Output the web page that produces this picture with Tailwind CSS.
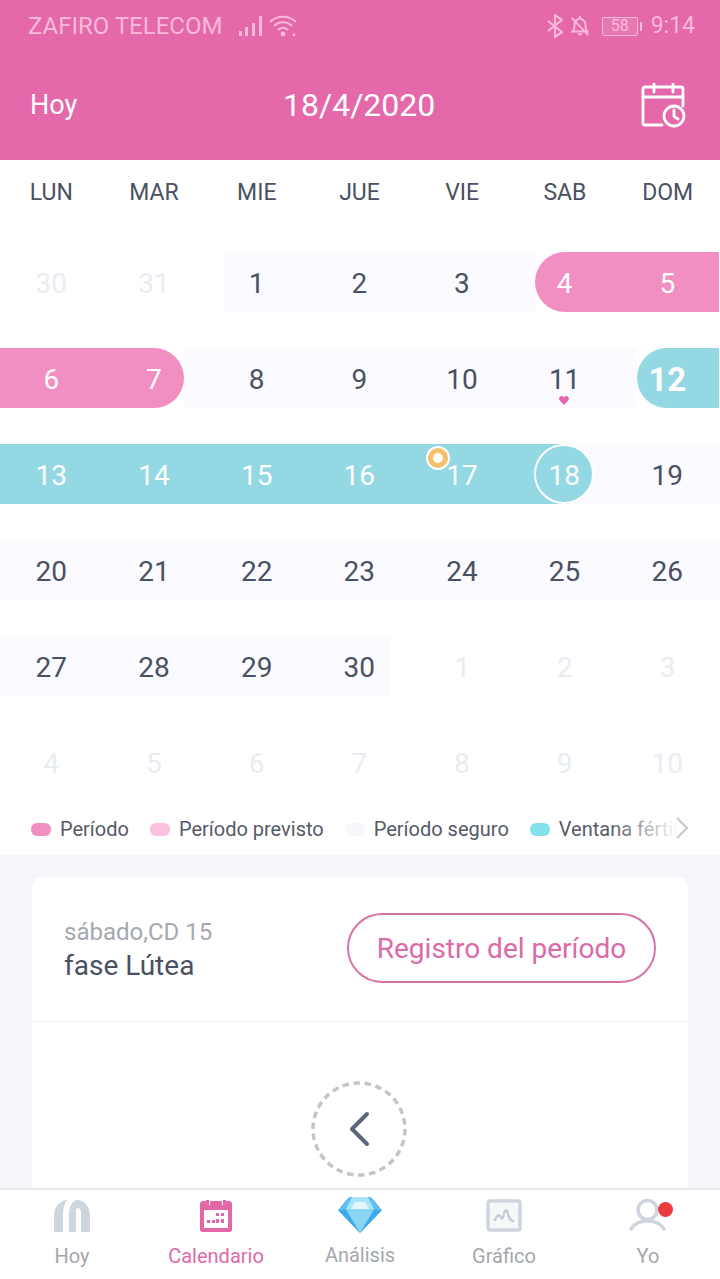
<!doctype html>
<html><head><meta charset="utf-8"><script src="https://cdn.jsdelivr.net/npm/@tailwindcss/browser@4"></script></head>
<body class="bg-white">
<div class="w-[720px] h-[1279px] overflow-hidden flex flex-col font-['Roboto',sans-serif] bg-white text-[#4a5163]">
  <header class="h-[160px] bg-[#e468aa] text-white shrink-0">
    <div class="h-[50px] flex items-center pl-[28px] pr-[25px] pt-[2px] text-[#f8b9da] text-[24px]">
      <span>ZAFIRO TELECOM</span>
      <svg class="ml-[17px]" width="25" height="22" viewBox="0 0 25 22" fill="#f8b9da"><rect x="0" y="16" width="3" height="5"/><rect x="6" y="12" width="3" height="9"/><rect x="13" y="8" width="3" height="13"/><rect x="20" y="1" width="3" height="20"/></svg>
      <svg class="ml-[5px]" width="28" height="24" viewBox="0 0 28 24" fill="none" stroke="#f8b9da" stroke-width="2.200"><path d="M1 8c7-7 19-7 26 0M5 12c5-5 13-5 18 0M9 16c3-3 7-3 10 0"/><circle cx="14" cy="20" r="2.400" fill="#f8b9da" stroke="none"/><circle cx="25" cy="21" r="1.400" fill="#f8b9da" stroke="none"/></svg>
      <div class="ml-auto flex items-center text-[23px]">
        <svg width="16" height="24" viewBox="0 0 16 24" fill="none" stroke="#f8b9da" stroke-width="2.200"><path d="M1 7l14 11-7 5V1l7 5L1 17"/></svg>
        <svg class="ml-[7px]" width="20" height="24" viewBox="0 0 22 24" fill="none" stroke="#f8b9da" stroke-width="2.200"><path d="M3 18c2-2 2-4 2-8 0-3 3-6 6-6s6 3 6 6c0 4 0 6 2 8zM9 21h4M11 1v3M2 3l18 19"/></svg>
        <div class="ml-[12px] w-[36px] h-[19px] border border-[#f8b9da] rounded-[2px] flex items-center justify-center text-[16px] leading-none bg-[#f8b9da]/20">58</div>
        <div class="ml-[2px] w-[2px] h-[9px] bg-[#f8b9da]"></div>
        <span class="ml-[9px]">9:14</span>
      </div>
    </div>
    <div class="h-[110px] flex items-center justify-between pl-[30px] pr-[34px]">
      <span class="text-[27px]">Hoy</span>
      <span class="text-[32px]">18/4/2020</span>
      <svg width="45" height="45" viewBox="0 0 45 45" fill="none" stroke="#fff" stroke-width="2.800" stroke-linecap="round" stroke-linejoin="round"><path d="M21 42H4a2 2 0 0 1-2-2V6a2 2 0 0 1 2-2h36a2 2 0 0 1 2 2v17"/><path d="M2 14h40M13 1v8M32 1v8"/><circle cx="33" cy="33" r="10"/><path d="M33 27v6.500l4 2.500"/></svg>
    </div>
  </header>

  <div class="h-[62px] pt-[4px] grid grid-cols-7 w-[719px] items-center text-center text-[23px] shrink-0">
    <span>LUN</span><span>MAR</span><span>MIE</span><span>JUE</span><span>VIE</span><span>SAB</span><span>DOM</span>
  </div>

  <div class="w-[719px] pt-[30px] flex flex-col gap-[36px] text-[28px] leading-[64px] text-center shrink-0">
    <div class="flex h-[60px]">
      <div class="flex w-[225px] shrink-0 text-[#e8edf4]"><span class="w-[102.67px] shrink-0">30</span><span class="w-[102.67px] shrink-0">31</span></div>
      <div class="flex w-[310px] shrink-0 bg-[#fafaff]"><span class="w-[102.67px] shrink-0 -ml-[19.670px]">1</span><span class="w-[102.67px] shrink-0">2</span><span class="w-[102.67px] shrink-0">3</span></div>
      <div class="flex w-[184px] shrink-0 bg-[#f28fc2] rounded-l-[30px] text-white"><span class="w-[102.67px] shrink-0 -ml-[21.670px]">4</span><span class="w-[102.67px] shrink-0">5</span></div>
    </div>
    <div class="flex h-[60px]">
      <div class="flex w-[184px] shrink-0 bg-[#f28fc2] rounded-r-[30px] text-white"><span class="w-[102.67px] shrink-0">6</span><span class="w-[102.67px] shrink-0">7</span></div>
      <div class="flex w-[453px] shrink-0 bg-[#fafaff]">
        <span class="w-[102.67px] shrink-0 ml-[21.330px]">8</span><span class="w-[102.67px] shrink-0">9</span><span class="w-[102.67px] shrink-0">10</span>
        <span class="w-[102.67px] shrink-0 relative">11<svg class="absolute left-[46px] top-[48px]" width="10" height="9" viewBox="0 0 10 9" fill="#e567a9"><path d="M5 9L.6 4.200C-.8 2 .800 0 2.600 0 3.700 0 4.500.6 5 1.500 5.500.6 6.300 0 7.400 0c1.800 0 3.400 2 2 4.200z"/></svg></span>
      </div>
      <div class="flex w-[82px] shrink-0 bg-[#93d8e2] rounded-l-[30px] text-white font-bold text-[33px]"><span class="w-[102.67px] shrink-0 -ml-[21px]">12</span></div>
    </div>
    <div class="flex h-[60px] bg-[#fafaff]">
      <div class="flex w-[593px] shrink-0 bg-[#93d8e2] rounded-r-[30px] text-white">
        <span class="w-[102.67px] shrink-0">13</span><span class="w-[102.67px] shrink-0">14</span><span class="w-[102.67px] shrink-0">15</span><span class="w-[102.67px] shrink-0">16</span>
        <span class="w-[102.67px] shrink-0 relative">17<span class="absolute left-[15px] top-[2px] w-[24px] h-[24px] rounded-full bg-white flex items-center justify-center"><span class="w-[20px] h-[20px] rounded-full border-[5px] border-[#f5bf6c] bg-white"></span></span></span>
        <span class="w-[60px] h-[60px] shrink-0 ml-[21px] leading-[60px] rounded-full border-[2px] border-white">18</span>
      </div>
      <div class="flex"><span class="w-[102.67px] ml-[23px] shrink-0">19</span></div>
    </div>
    <div class="flex h-[60px] bg-[#fafaff]">
      <span class="w-[102.67px] shrink-0">20</span><span class="w-[102.67px] shrink-0">21</span><span class="w-[102.67px] shrink-0">22</span><span class="w-[102.67px] shrink-0">23</span><span class="w-[102.67px] shrink-0">24</span><span class="w-[102.67px] shrink-0">25</span><span class="w-[102.67px] shrink-0">26</span>
    </div>
    <div class="flex h-[60px]">
      <div class="flex w-[390px] shrink-0 bg-[#fafaff]"><span class="w-[102.67px] shrink-0">27</span><span class="w-[102.67px] shrink-0">28</span><span class="w-[102.67px] shrink-0">29</span><span class="w-[102.67px] shrink-0">30</span></div>
      <div class="flex text-[#e8edf4]"><span class="w-[102.67px] shrink-0 ml-[21px]">1</span><span class="w-[102.67px] shrink-0">2</span><span class="w-[102.67px] shrink-0">3</span></div>
    </div>
    <div class="flex h-[60px] text-[#e8edf4]">
      <span class="w-[102.67px] shrink-0">4</span><span class="w-[102.67px] shrink-0">5</span><span class="w-[102.67px] shrink-0">6</span><span class="w-[102.67px] shrink-0">7</span><span class="w-[102.67px] shrink-0">8</span><span class="w-[102.67px] shrink-0">9</span><span class="w-[102.67px] shrink-0">10</span>
    </div>
  </div>

  <div class="relative h-[63px] flex items-center pl-[31px] pt-[11px] text-[20px] whitespace-nowrap overflow-hidden shrink-0 text-[#555a68]">
    <span class="w-[20px] h-[13px] rounded-[6px] bg-[#f08fc0] shrink-0"></span><span class="ml-[9px]">Período</span>
    <span class="ml-[21px] w-[20px] h-[13px] rounded-[6px] bg-[#fbc0dd] shrink-0"></span><span class="ml-[9px]">Período previsto</span>
    <span class="ml-[21px] w-[20px] h-[13px] rounded-[6px] bg-[#f8f7fb] shrink-0"></span><span class="ml-[9px]">Período seguro</span>
    <span class="ml-[21px] w-[20px] h-[13px] rounded-[6px] bg-[#84e1ec] shrink-0"></span><span class="ml-[9px]">Ventana fértil</span>
    <div class="absolute left-[610px] right-0 top-0 bottom-0 bg-linear-to-r from-white/0 to-white to-[62%]"></div>
    <svg class="absolute left-[675px] top-[24px]" width="14" height="24" viewBox="0 0 14 24" fill="none" stroke="#c9c9cd" stroke-width="2.200"><path d="M2 2l10 10L2 22"/></svg>
  </div>

  <main class="flex-1 bg-[#f5f6fa] px-[32px] pt-[22px] overflow-hidden min-h-0">
    <div class="bg-white rounded-t-[10px] h-[400px]">
      <div class="h-[145px] flex items-center justify-between pl-[32px] pr-[32px] border-b border-[#eff0f3]">
        <div class="pt-[2px]">
          <div class="text-[24px] leading-[32px] text-[#a5a8b0]">sábado,CD 15</div>
          <div class="text-[28px] leading-[36px] text-[#4a5060]">fase Lútea</div>
        </div>
        <div class="w-[309px] h-[70px] -mt-[2px] pt-[2px] rounded-full border-2 border-[#d672a8] text-[#dc6aa8] text-[28px] flex items-center justify-center">Registro del período</div>
      </div>
      <div class="flex justify-center pt-[59px]">
        <div class="relative w-[96px] h-[96px] mr-[2px] flex items-center justify-center">
          <svg class="absolute inset-0" width="96" height="96" viewBox="0 0 96 96" fill="none"><circle cx="48" cy="48" r="46" stroke="#c4c5c9" stroke-width="3.500" stroke-dasharray="6.500 4.600"/></svg>
          <svg class="ml-[2px]" width="24" height="36" viewBox="0 0 24 36" fill="none" stroke="#5d6579" stroke-width="4" stroke-linecap="round" stroke-linejoin="round"><path d="M19 3L4 18l15 15"/></svg>
        </div>
      </div>
    </div>
  </main>

  <nav class="h-[91px] shrink-0 bg-white border-t-2 border-[#e9eaee] grid grid-cols-5 text-center text-[20px] text-[#a4a7ae]">
    <div class="flex flex-col items-center pt-[9px]">
      <svg width="38" height="34" viewBox="0 0 38 34" fill="#ced5df"><path d="M1 33V17C1 8 6 2 14 1c-3 4-4 9-4 14v18z"/><path d="M16 33V15C16 8 19 2 24 1c8 0 13 7 13 16v16h-9V14c0-3-1-5-3-5s-2 3-2 6v18z"/></svg>
      <span class="mt-[8px]">Hoy</span>
    </div>
    <div class="flex flex-col items-center pt-[9px] text-[#de6aa9]">
      <svg width="34" height="34" viewBox="0 0 34 34"><rect x="1" y="2" width="32" height="31" rx="3" fill="#e567a9"/><rect x="7" y="0" width="4" height="6" fill="#fff"/><rect x="23" y="0" width="4" height="6" fill="#fff"/><rect x="7" y="1" width="3" height="5" fill="#e567a9"/><rect x="24" y="1" width="3" height="5" fill="#e567a9"/><rect x="5" y="11" width="24" height="18" fill="#fff"/><g fill="#e567a9"><rect x="17" y="14" width="3" height="3"/><rect x="22" y="14" width="3" height="3"/><rect x="8" y="21" width="3" height="3"/><rect x="13" y="21" width="3" height="3"/><rect x="17" y="20" width="3" height="4"/><rect x="22" y="20" width="3" height="4"/></g></svg>
      <span class="mt-[8px]">Calendario</span>
    </div>
    <div class="flex flex-col items-center pt-[6px]">
      <svg width="46" height="38" viewBox="0 0 46 38"><path d="M11 2q1-1 2-1h20q1 0 2 1l10 12-22 23L1 14z" fill="#5cc0ee"/><path d="M15 1h16l6 12H9z" fill="#a9e3f7"/><path d="M9 13h28L23 37z" fill="#8ad6f4"/><path d="M18 6h10l4 7H14z" fill="#e6f7fc"/><path d="M1 14h8l14 23z" fill="#3fa9ea"/><path d="M45 14h-8L23 37z" fill="#3fa9ea"/></svg>
      <span class="mt-[6px]">Análisis</span>
    </div>
    <div class="flex flex-col items-center pt-[9px]">
      <svg width="36" height="34" viewBox="0 0 36 34" fill="none"><rect x="2" y="2" width="32" height="29" rx="2" stroke="#ced5df" stroke-width="3.500" fill="#f6f7f9"/><path d="M9 21c2-5 4-6 5-4s2 4 3 1 2-9 4-6 1 9 6 10" stroke="#c3cad5" stroke-width="2.300" stroke-linecap="round"/></svg>
      <span class="mt-[8px]">Gráfico</span>
    </div>
    <div class="flex flex-col items-center pt-[9px]">
      <svg width="46" height="34" viewBox="0 0 46 34" fill="none" class="ml-[6px]"><circle cx="19.500" cy="11" r="9.500" stroke="#ced5df" stroke-width="3.500"/><path d="M3 30c3-5 9-8 16.500-8S33 25 36 30" stroke="#ced5df" stroke-width="3.500" stroke-linecap="round"/><circle cx="37.500" cy="10.500" r="7.500" fill="#ea3c3f"/></svg>
      <span class="mt-[8px]">Yo</span>
    </div>
  </nav>
</div>
</body></html>
